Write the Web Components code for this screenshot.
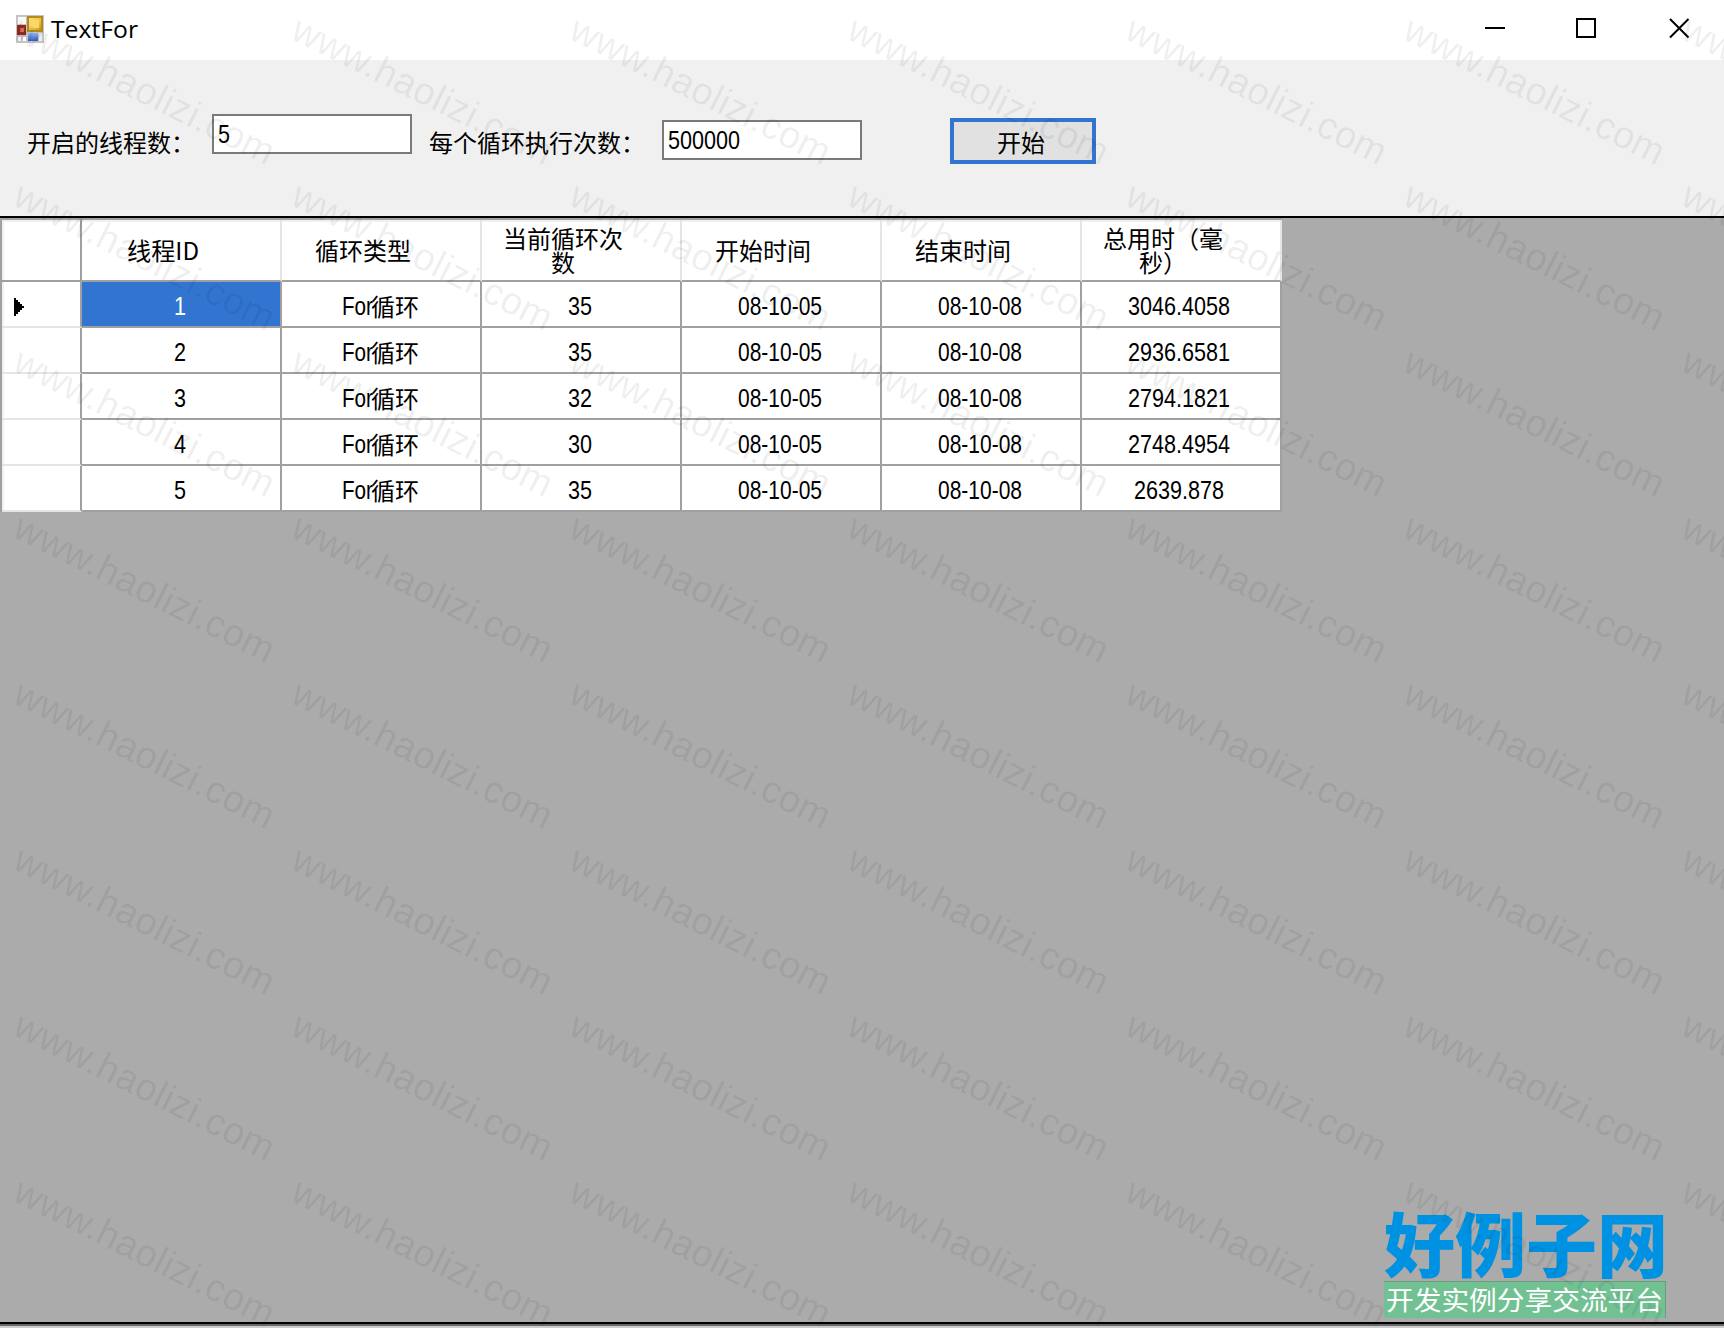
<!DOCTYPE html>
<html lang="zh">
<head>
<meta charset="utf-8">
<title>TextFor</title>
<style>
html, body{
  margin: 0;
  height: 100%;
  overflow: hidden;
}
</style>
</head>
<body>
<app-window>
  <title-bar slot="title">TextFor</title-bar>
  <tool-panel slot="tools">
    <fit-text kind="cjk" width="168">开启的线程数：</fit-text>
    <text-field style="margin: 0 17px 0 17px" value="5"></text-field>
    <fit-text kind="cjk" width="216">每个循环执行次数：</fit-text>
    <text-field style="margin: 6px 88px 0 17px" value="500000"></text-field>
    <push-button>开始</push-button>
  </tool-panel>
  <data-grid></data-grid>
  <site-logo slot="over"></site-logo>
  <water-mark slot="over" text="www.haolizi.com"></water-mark>
</app-window>

<script>
const SVG = "http://www.w3.org/2000/svg";

// Build a template from a string
function makeTemplate(html){
  const template = document.createElement("template");
  template.innerHTML = html;
  return template;
}

// Base class - attaches the shadow root and clones the template into it
class BaseElement extends HTMLElement{
  constructor(template){
    super();
    this.attachShadow({mode:"open"});
    this.shadowRoot.appendChild(template.content.cloneNode(true));
  }
}

// One line of text set to an exact width
const fit_template = makeTemplate(`
<style>
:host{ display: block; flex: none; height: 24px; }
svg{ display: block; overflow: visible; }
text{ fill: currentColor; font: 25px "Liberation Sans", Arial, sans-serif; }
text.cjk{ font: 24px "Noto Sans CJK SC", sans-serif; }
text.title{ font: 24.500px "Open Sans", sans-serif; }
text.slogan{ font: 26px "Noto Sans CJK SC", sans-serif; }
text.logo{ font: 900 70px "Noto Sans CJK SC", sans-serif; }
</style>
<svg height="24"><text y="21.500" lengthAdjust="spacingAndGlyphs"></text></svg>`);

class FitText extends BaseElement{
  constructor(){
    super(fit_template);
  }
  connectedCallback(){
    const width = this.getAttribute("width");
    const text = this.shadowRoot.querySelector("text");
    this.shadowRoot.querySelector("svg").setAttribute("width", width);
    text.setAttribute("textLength", width);
    text.setAttribute("class", this.getAttribute("kind") || "latin");
    text.textContent = this.textContent;
  }
}

// Window frame
const window_template = makeTemplate(`
<style>
:host{
  position: relative;
  display: flex;
  flex-direction: column;
  width: 1724px;
  height: 1328px;
  overflow: hidden;
  color: #000;
  background: #ababab;
}
main{ flex: 1; border-top: 2px solid #000; }
footer{
  height: 2px;
  border-top: 2px solid #000;
  border-bottom: 2px solid #cdcdcd;
  background: #686868;
}
</style>
<slot name="title"></slot>
<slot name="tools"></slot>
<main><slot></slot></main>
<footer></footer>
<slot name="over"></slot>`);

class AppWindow extends BaseElement{
  constructor(){
    super(window_template);
  }
}

const title_template = makeTemplate(`
<style>
:host{ display: flex; height: 60px; background: #fff; }
.icon{ margin: 15px 7px 0 16px; }
fit-text{ margin-top: 16px; }
.buttons{ margin: 16px 33px 0 auto; }
</style>
<svg class="icon" width="28" height="28">
  <defs>
    <linearGradient id="gold" x2="1" y2="1"><stop stop-color="#fbe08a"/><stop offset=".6" stop-color="#edc240"/><stop offset="1" stop-color="#b8860b"/></linearGradient>
    <linearGradient id="blue" x2="0" y2="1"><stop stop-color="#8fb0f2"/><stop offset="1" stop-color="#3560c4"/></linearGradient>
  </defs>
  <rect width="28" height="28" fill="#c4c4c4"/>
  <rect x="2" y="2" width="8" height="7" fill="#fafafa"/>
  <rect x="2" y="22" width="3" height="4" fill="#fff"/>
  <rect x="7" y="22" width="3" height="4" fill="#fff"/>
  <rect x="23" y="18" width="3" height="8" fill="#eee"/>
  <rect x="1" y="10" width="9" height="10" fill="#922a20"/>
  <rect x="4" y="13" width="4" height="4" fill="#d4695c"/>
  <rect x="12" y="2" width="14" height="14" fill="url(#gold)" stroke="#b48a1e" stroke-width="2"/>
  <rect x="14" y="5" width="9" height="8" fill="#fbd766"/>
  <rect x="12" y="18" width="10" height="8" fill="url(#blue)"/>
</svg>
<fit-text kind="title" width="87"></fit-text>
<svg class="buttons" width="208" height="24" fill="none" stroke="#000" stroke-width="2">
  <path d="M2 12H22M94 3H112V21H94Z"/>
  <path d="M187 3L205.500 21.500M205.500 3L187 21.500"/>
</svg>`);

class TitleBar extends BaseElement{
  constructor(){
    super(title_template);
    this.shadowRoot.querySelector("fit-text").textContent = this.textContent;
  }
}

const panel_template = makeTemplate(`
<style>
:host{
  display: flex;
  align-items: flex-start;
  box-sizing: border-box;
  height: 156px;
  padding: 54px 0 0 27px;
  background: #f0f0f0;
}
::slotted(fit-text){ margin-top: 16px; }
::slotted(push-button){ margin-top: 4px; }
</style>
<slot></slot>`);

class ToolPanel extends BaseElement{
  constructor(){
    super(panel_template);
  }
}

const field_template = makeTemplate(`
<style>
:host{
  display: block;
  box-sizing: border-box;
  width: 200px;
  height: 40px;
  padding: 5px 4px;
  border: 2px solid #7a7a7a;
  background: #fff;
}
</style>
<fit-text></fit-text>`);

class TextField extends BaseElement{
  constructor(){
    super(field_template);
    const text = this.shadowRoot.querySelector("fit-text");
    const value = this.getAttribute("value");
    text.setAttribute("width", value.length * 12);
    text.textContent = value;
  }
}

const button_template = makeTemplate(`
<style>
:host{
  display: flex;
  justify-content: center;
  box-sizing: border-box;
  width: 146px;
  height: 46px;
  padding: 8px 4px 0 0;
  border: 4px solid #3275d0;
  background: #e1e1e1;
}
</style>
<fit-text kind="cjk" width="48"></fit-text>`);

class PushButton extends BaseElement{
  constructor(){
    super(button_template);
    this.shadowRoot.querySelector("fit-text").textContent = this.textContent;
  }
}

// Data grid
const headers = [["线程ID"], ["循环类型"], ["当前循环次", "数"], ["开始时间"], ["结束时间"], ["总用时（毫", "秒）"]];
const rows = [
  ["1", "For循环", "35", "08-10-05", "08-10-08", "3046.4058"],
  ["2", "For循环", "35", "08-10-05", "08-10-08", "2936.6581"],
  ["3", "For循环", "32", "08-10-05", "08-10-08", "2794.1821"],
  ["4", "For循环", "30", "08-10-05", "08-10-08", "2748.4954"],
  ["5", "For循环", "35", "08-10-05", "08-10-08", "2639.878"]
];

const grid_template = makeTemplate(`
<style>
:host{
  display: grid;
  grid-template-columns: 80px repeat(6, 200px);
  grid-template-rows: 62px repeat(5, 46px);
  width: 1280px;
  border: solid #a0a0a0;
  border-width: 2px 0 0 2px;
}
div{
  display: flex;
  align-items: center;
  justify-content: center;
  box-sizing: border-box;
  padding: 2px 2px 0 0;
  border: solid #a0a0a0;
  border-width: 0 2px 2px 0;
  background: #fff;
}
div:nth-of-type(7n){ padding-right: 4px; }
.head, .head:nth-of-type(7n){
  flex-direction: column;
  padding: 0 36px 0 0;
  border-right-color: #e5e5e5;
  box-shadow: inset 0 2px #f0f0f0;
}
.side{
  justify-content: flex-start;
  padding-left: 12px;
  border-bottom-color: #e5e5e5;
  box-shadow: inset 2px 0 #f0f0f0;
}
.corner{ border-color: #a0a0a0; box-shadow: inset 2px 2px #f0f0f0; }
.selected{ background: #3275d0; color: #fff; }
.latin + .cjk{ margin: 1px 0 0 -2px; }
</style>`);

class DataGrid extends BaseElement{
  constructor(){
    super(grid_template);
    this.addCell("corner");
    headers.forEach(lines => {
      const cell = this.addCell("head");
      lines.forEach(line => this.addText(cell, line, "cjk"));
    });
    rows.forEach((row, index) => {
      const side = this.addCell("side");
      // Marker of the current row
      if(index == 0)
        side.innerHTML = `<svg width="10" height="18" style="margin-top: 4px"><path d="M0 0H2V2H4V4H6V6H8V8H10V10H8V12H6V14H4V16H2V18H0Z"/></svg>`;
      row.forEach((value, column) => {
        const cell = this.addCell(index == 0 && column == 0 ? "selected" : "");
        const split = value.match(/^([\x00-\x7f]*)(.*)$/);
        this.addText(cell, split[1], "latin");
        if(split[2])
          this.addText(cell, split[2], "cjk");
      });
    });
  }
  addCell(name){
    const cell = document.createElement("div");
    cell.className = name;
    this.shadowRoot.appendChild(cell);
    return cell;
  }
  addText(cell, value, kind){
    const text = document.createElement("fit-text");
    let width = 0;
    for(const c of value)
      width += c > "\x7f" ? 24 : c == "." || c == "-" ? 6 : 12;
    if(value == "For")
      width = 31;
    text.className = kind;
    text.setAttribute("kind", kind);
    text.setAttribute("width", width);
    text.textContent = value;
    cell.appendChild(text);
  }
}

// Logo in the lower right corner
const logo_template = makeTemplate(`
<style>
:host{ position: absolute; left: 1384px; top: 1206px; width: 282px; }
.name{ height: 75px; color: #0092e2; }
.name fit-text{ padding-top: 44px; }
.slogan{
  box-sizing: border-box;
  height: 37px;
  padding: 6px 0 0 2px;
  border-top: 1px solid #6b9c7e;
  border-right: 1px solid #6b9c7e;
  background: #72c193;
  color: #fff;
}
</style>
<div class="name"><fit-text kind="logo" width="284">好例子网</fit-text></div>
<div class="slogan"><fit-text kind="slogan" width="277">开发实例分享交流平台</fit-text></div>`);

class SiteLogo extends BaseElement{
  constructor(){
    super(logo_template);
  }
}

// Tiled slanted text over the whole window
const mark_template = makeTemplate(`
<style>
:host{ position: absolute; inset: 0; pointer-events: none; }
text{ font: 38px "Liberation Sans", Arial, sans-serif; fill: #000; fill-opacity: .07; }
</style>
<svg width="1724" height="1328"></svg>`);

class WaterMark extends BaseElement{
  constructor(){
    super(mark_template);
    const svg = this.shadowRoot.querySelector("svg");
    for(let y = 38; y < 1328; y += 166)
      for(let x = 11; x < 1724; x += 278){
        const text = document.createElementNS(SVG, "text");
        text.setAttribute("transform", `translate(${x} ${y}) rotate(26.5)`);
        text.setAttribute("textLength", 286);
        text.textContent = this.getAttribute("text");
        svg.appendChild(text);
      }
  }
}

customElements.define("app-window", AppWindow);
customElements.define("title-bar", TitleBar);
customElements.define("tool-panel", ToolPanel);
customElements.define("text-field", TextField);
customElements.define("push-button", PushButton);
customElements.define("data-grid", DataGrid);
customElements.define("site-logo", SiteLogo);
customElements.define("water-mark", WaterMark);
// Last, so that the texts are already filled in by the elements above
customElements.define("fit-text", FitText);
</script>
</body>
</html>
